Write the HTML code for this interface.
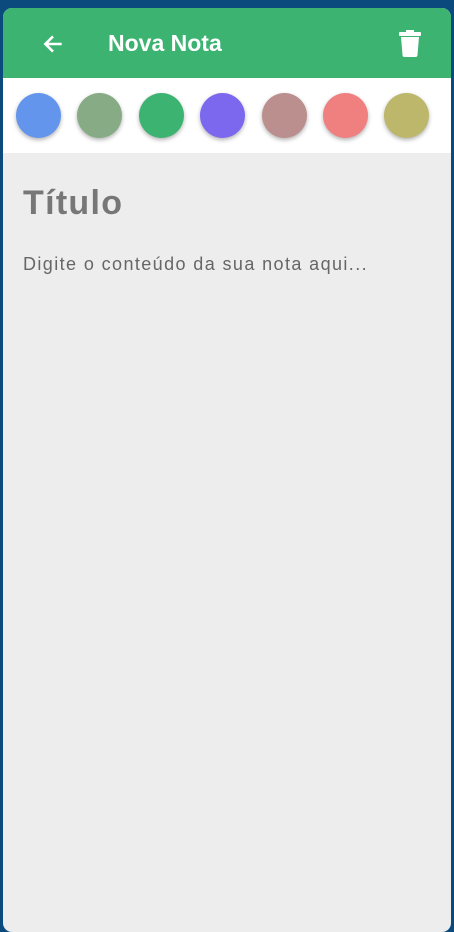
<!DOCTYPE html>
<html><head><style>
body{margin:0;width:454px;height:932px;background:#0b4a7c;overflow:hidden;font-family:"Liberation Sans",sans-serif;position:relative}
.card{position:absolute;left:3px;top:8px;width:448px;height:924px;background:#ededed;border-radius:9px;overflow:hidden}
.hdr{height:70px;background:#3cb371;position:relative}
.hdr .t{position:absolute;left:105px;top:22px;color:#fff;font-weight:bold;font-size:23px}
.colors{height:75px;background:#fff;position:relative}
.c{position:absolute;top:15px;width:45px;height:45px;border-radius:50%;box-shadow:0 2px 4px rgba(0,0,0,.3)}
.title{position:absolute;left:20px;top:176px;font-size:34px;color:#777;font-weight:bold;letter-spacing:1.3px}
.body{position:absolute;left:20px;top:246px;font-size:18px;color:#666;letter-spacing:1.4px}
</style></head><body>
<div class="card">
<div class="hdr">
<svg style="position:absolute;left:37px;top:23px" width="26" height="26" viewBox="0 0 24 24"><path d="M20 12H5M12 5l-7 7 7 7" stroke="#fff" stroke-width="2.4" fill="none"/></svg>
<div class="t">Nova Nota</div>
<svg style="position:absolute;left:395px;top:22px" width="24" height="27" viewBox="0 0 24 27"><rect x="1" y="2" width="22" height="4" rx="1" fill="#fff"/><rect x="8" y="0" width="8" height="3" fill="#fff"/><path d="M3 7h18l-1.5 18a2 2 0 0 1-2 2h-11a2 2 0 0 1-2-2z" fill="#fff"/></svg>
</div>
<div class="colors">
<div class="c" style="left:13px;background:#6495ed"></div>
<div class="c" style="left:74px;background:#86ab85"></div>
<div class="c" style="left:136px;background:#3cb371"></div>
<div class="c" style="left:197px;background:#7b68ee"></div>
<div class="c" style="left:259px;background:#bc8f8f"></div>
<div class="c" style="left:320px;background:#f08080"></div>
<div class="c" style="left:381px;background:#bdb76b"></div>
</div>
<div class="title">Título</div>
<div class="body">Digite o conteúdo da sua nota aqui...</div>
</div>
</body></html>
